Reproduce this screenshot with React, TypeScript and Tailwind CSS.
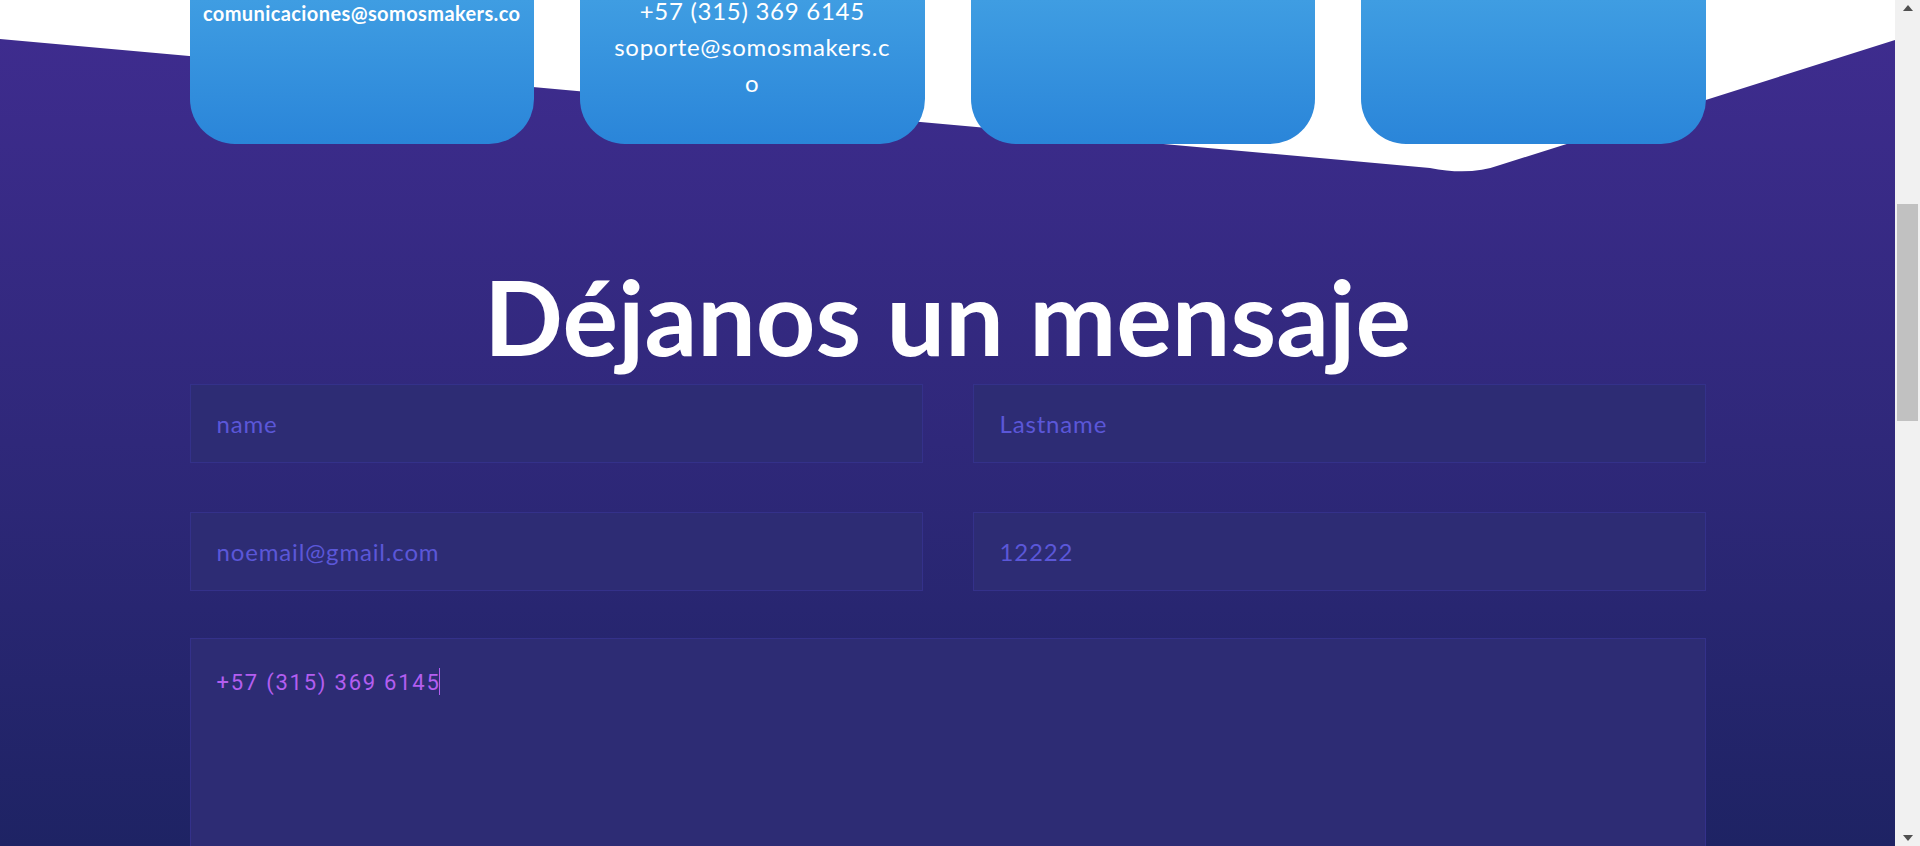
import React from 'react';

const font = { fontFamily: 'Lato, "Open Sans", sans-serif' };

function Backdrop() {
  return (
    <svg
      className="absolute inset-0 h-full w-full"
      viewBox="0 0 1895 846"
      preserveAspectRatio="none"
      aria-hidden="true"
    >
      <defs>
        <linearGradient id="purple" x1="0" y1="39" x2="0" y2="846" gradientUnits="userSpaceOnUse">
          <stop offset="0" stopColor="#3e2c8e" />
          <stop offset="0.5" stopColor="#2f287a" />
          <stop offset="1" stopColor="#1e2364" />
        </linearGradient>
      </defs>
      <path d="M0 39 L1430 168 Q1470 176 1500 165 L1895 40 L1895 846 L0 846 Z" fill="url(#purple)" />
    </svg>
  );
}

function Scrollbar() {
  return (
    <div className="flex w-[25px] shrink-0 flex-col items-center bg-[#f1f1f1]">
      <div className="mt-[5px] h-0 w-0 border-x-[5px] border-b-[6px] border-x-transparent border-b-[#505050]" />
      <div className="mt-[193px] h-[217px] w-[21px] bg-[#c1c1c1]" />
      <div className="mt-auto mb-[5px] h-0 w-0 border-x-[5px] border-t-[6px] border-x-transparent border-t-[#505050]" />
    </div>
  );
}

function Field({ placeholder }: { placeholder: string }) {
  return (
    <input
      type="text"
      placeholder={placeholder}
      className="h-[79px] w-full border border-[#34318a] bg-[#2d2c74] px-[26px] text-[24px] tracking-[0.035em] text-[#5b57d8] outline-none placeholder:text-[#5b57d8]"
      style={font}
    />
  );
}

export default function App() {
  return (
    <div className="flex h-[846px] w-full overflow-hidden bg-white" style={font}>
      <main className="relative flex-1 overflow-hidden">
        <Backdrop />
        <div className="relative mx-auto w-[1516px]">
          {/* contact cards, tops scrolled out of view */}
          <div className="grid grid-cols-4 gap-[46px]">
            <div className="h-[144px] rounded-b-[45px] bg-gradient-to-b from-[#3f9de2] to-[#2a85d9] text-center text-white">
              <p className="text-[20px] font-bold leading-[26px] tracking-[0.02em]">comunicaciones@somosmakers.co</p>
            </div>
            <div className="h-[144px] rounded-b-[45px] bg-gradient-to-b from-[#3f9de2] to-[#2a85d9] text-center text-white">
              <p className="-mt-[7px] text-[24px] leading-[36px] tracking-[0.03em]">+57 (315) 369 6145</p>
              <p className="text-[24px] leading-[36px] tracking-[0.03em]">
                soporte@somosmakers.c
                <br />o
              </p>
            </div>
            <div className="h-[144px] rounded-b-[45px] bg-gradient-to-b from-[#3f9de2] to-[#2a85d9]" />
            <div className="h-[144px] rounded-b-[45px] bg-gradient-to-b from-[#3f9de2] to-[#2a85d9]" />
          </div>

          <h2 className="mt-[120px] text-center text-[104px] font-bold leading-none text-white">Déjanos un mensaje</h2>

          <form className="mt-[16px]">
            <div className="grid grid-cols-2 gap-x-[50px] gap-y-[49px]">
              <Field placeholder="name" />
              <Field placeholder="Lastname" />
              <Field placeholder="noemail@gmail.com" />
              <Field placeholder="12222" />
            </div>
            <div
              className="mt-[47px] h-[260px] w-full border border-[#34318a] bg-[#2d2c74] px-[26px] pt-[24px] text-[22px] tracking-[0.08em] text-[#b35ef0]"
              style={{ fontFamily: 'Roboto, "Liberation Sans", sans-serif' }}
            >
              <span>+57 (315) 369 6145</span>
              <span className="-ml-[2px] inline-block h-[27px] w-[1px] translate-y-[5px] bg-[#b35ef0]" />
            </div>
          </form>
        </div>
      </main>
      <Scrollbar />
    </div>
  );
}
